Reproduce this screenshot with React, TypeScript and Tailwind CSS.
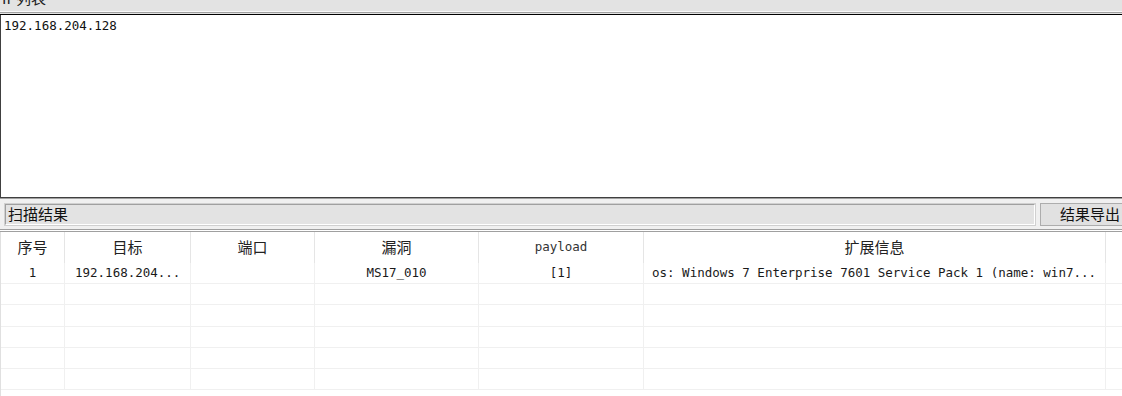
import React from "react";

const cols = [64, 126, 124, 164, 165, 462, 17];
const headers = ["序号", "目标", "端口", "漏洞", "payload", "扩展信息", ""];
const row1 = ["1", "192.168.204...", "", "MS17_010", "[1]", "os: Windows 7 Enterprise 7601 Service Pack 1 (name: win7...", ""];
const aligns = ["text-center", "text-left pl-[10px]", "text-center", "text-center", "text-center", "text-left pl-[8px]", "text-center"];
const rowHeights = ["h-[21px]", "h-[21px]", "h-[22px]", "h-[21px]", "h-[21px]", "h-[21px]"];

const cjk = "font-['Noto_Sans_CJK_SC','Noto_Sans',sans-serif]";
const mono = "font-['DejaVu_Sans_Mono','Liberation_Mono',monospace]";

export default function App() {
  return (
    <div className={`w-[1122px] h-[396px] overflow-hidden bg-[#f0f0f0] flex flex-col ${cjk}`}>
      <div className="h-[11px] bg-[#e3e3e3] overflow-hidden shrink-0">
        <div className="-mt-[12px] pl-[2px] text-[15px] leading-[20px] text-[#222]">IP列表</div>
      </div>
      <div className="h-px bg-[#f8f8f8] shrink-0" />
      <div className="h-px bg-[#a0a0a0] shrink-0" />
      <div className="h-px bg-[#e3e3e3] shrink-0" />
      <div className="h-px bg-[#000] shrink-0" />
      <div className="h-[182px] bg-white border-l border-[#404040] shrink-0 pl-[3px] pt-[4px]">
        <div className={`${mono} text-[12.5px] leading-[14px] text-[#111] font-medium`}>192.168.204.128</div>
      </div>
      <div className="h-px bg-[#404040] shrink-0" />
      <div className="h-px bg-[#a0a0a0] shrink-0" />
      <div className="h-[30px] shrink-0 flex items-center pl-[5px]">
        <div className="flex-1 h-[21px] bg-[#e3e3e3] border border-t-[#a0a0a0] border-l-[#a0a0a0] border-b-[#fff] border-r-[#fff] outline outline-1 outline-[#d0d0d0] flex items-center pl-[2px] text-[15px] leading-[18px] text-[#111]">
          扫描结果
        </div>
        <div className="ml-[5px] w-[82px] h-[23px] shrink-0 bg-[#e1e1e1] border border-[#adadad] border-r-0 flex items-center pl-[19px] text-[15px] leading-[18px] text-[#111] whitespace-nowrap">
          结果导出
        </div>
      </div>
      <div className="h-px bg-[#a0a0a0] shrink-0" />
      <div className="h-px bg-[#ffffff] shrink-0" />
      <div className="h-px bg-[#a0a0a0] shrink-0" />
      <div className="flex-1 bg-white border-l border-[#e0e0e0]">
        <div className="flex h-[31px]">
          {headers.map((h, i) => (
            <div
              key={i}
              style={{ width: cols[i] }}
              className={`shrink-0 h-full flex items-center justify-center border-r border-[#e5e5e5] ${h === "payload" ? `${mono} text-[12.5px] text-[#333]` : "text-[15px] text-[#222]"}`}
            >
              {h}
            </div>
          ))}
        </div>
        {rowHeights.map((hc, r) => (
          <div key={r} className={`flex ${hc} border-b border-[#f0f0f0]`}>
            {cols.map((w, i) => (
              <div
                key={i}
                style={{ width: w }}
                className={`shrink-0 h-full border-r border-[#f0f0f0] ${mono} text-[12.5px] leading-[20px] text-[#1a1a1a] font-medium whitespace-nowrap overflow-hidden ${aligns[i]}`}
              >
                {r === 0 ? row1[i] : ""}
              </div>
            ))}
          </div>
        ))}
      </div>
    </div>
  );
}
